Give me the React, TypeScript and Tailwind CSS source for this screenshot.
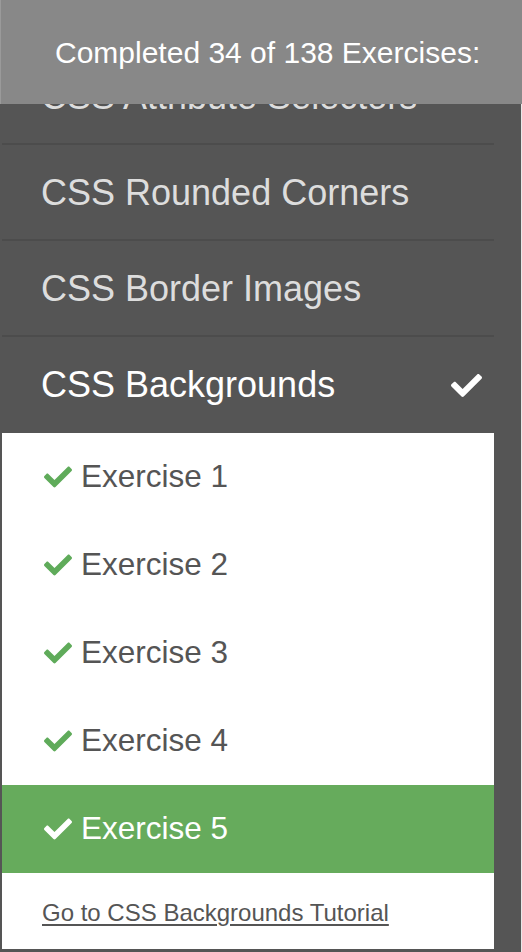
import { FaCheck } from "react-icons/fa";

const topics = [
  { name: "CSS Attribute Selectors", done: false },
  { name: "CSS Rounded Corners", done: false },
  { name: "CSS Border Images", done: false },
];

const exercises = [1, 2, 3, 4, 5];

export default function App() {
  const current = 5;

  return (
    <div className="relative h-[952px] w-[522px] overflow-hidden bg-[#555555] font-['Liberation_Sans',Arial,sans-serif]">
      {/* progress header sits over the scrolled list */}
      <div className="absolute left-0 right-0 top-0 z-10 flex h-[104px] items-center border-l border-[#9a9a9a] bg-[#888888] pl-[54px] text-[30px] text-white">
        Completed 34 of 138 Exercises:
      </div>

      <div className="flex h-full">
        <div className="ml-[2px] w-[492px] pt-[49px]">
          {topics.map((t) => (
            <div
              key={t.name}
              className="flex h-[96px] items-center border-b-2 border-[#4c4c4c] pl-[39px] pt-[2px] text-[36px] text-[#dddddd]"
            >
              {t.name}
            </div>
          ))}

          <div className="flex h-[96px] items-center justify-between pl-[39px] pr-[12px] text-[36px] text-white">
            <span>CSS Backgrounds</span>
            <FaCheck size={31} />
          </div>

          <div className="bg-white">
            {exercises.map((n) => {
              const active = n === current;
              return (
                <div
                  key={n}
                  className={`flex h-[88px] items-center gap-[9px] pl-[42px] text-[31.5px] ${
                    active ? "bg-[#66ab5c] text-white" : "text-[#555555]"
                  }`}
                >
                  <FaCheck size={28} className={active ? "text-white" : "text-[#5fab5a]"} />
                  <span>Exercise {n}</span>
                </div>
              );
            })}
            <div className="h-[76px] pl-[40px] pt-[22px]">
              <a href="#" className="text-[24px] text-[#555555] underline underline-offset-[3px]">
                Go to CSS Backgrounds Tutorial
              </a>
            </div>
          </div>
        </div>
        <div className="flex-1" />
        <div className="w-[1px] bg-[#e8e8e8]" />
      </div>
    </div>
  );
}
